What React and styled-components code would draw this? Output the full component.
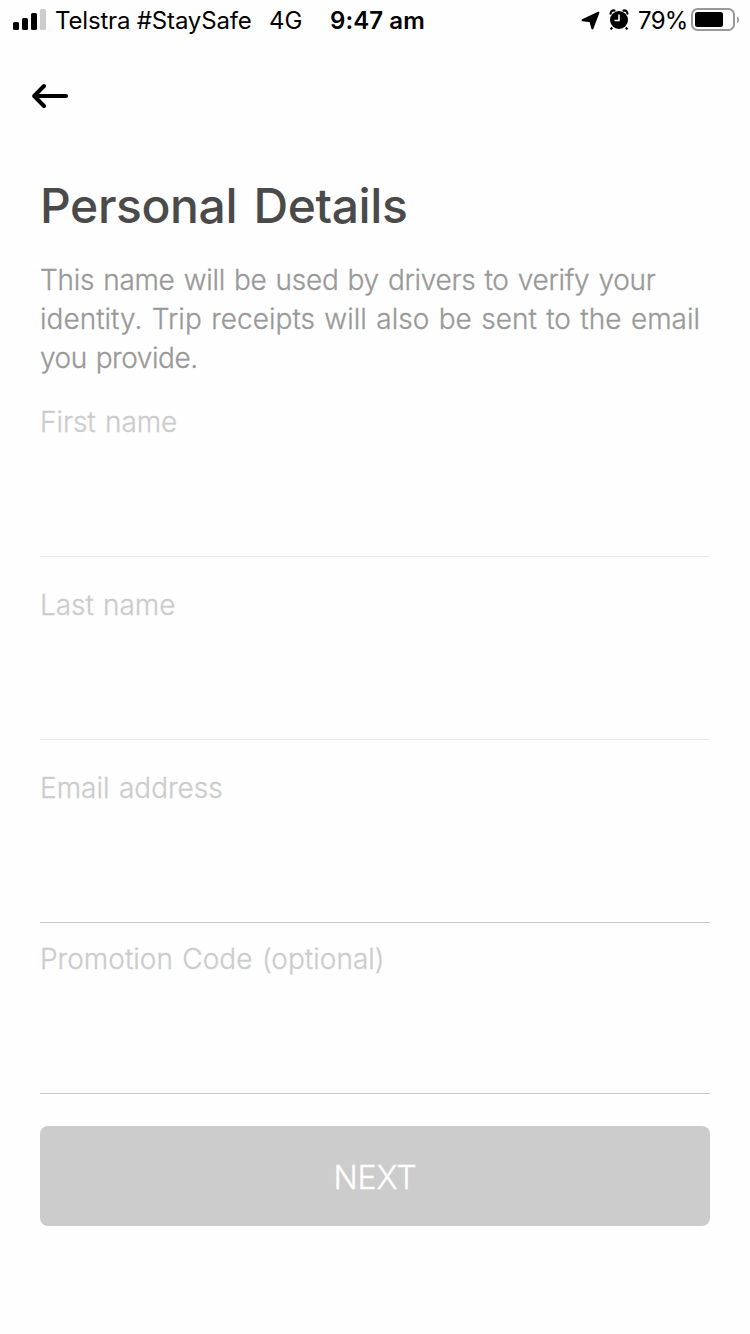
import React, { useState } from "react";
import styled, { createGlobalStyle } from "styled-components";

const GlobalStyle = createGlobalStyle`
  * {
    box-sizing: border-box;
  }

  body {
    margin: 0;
    background: #fefefe;
    font-family: Inter, "Liberation Sans", sans-serif;
  }
`;

const Screen = styled.div`
  width: 750px;
  height: 1334px;
  overflow: hidden;
  background: #fefefe;
`;

const StatusBar = styled.header`
  display: flex;
  align-items: center;
  height: 40px;
  padding-left: 13px;
  color: #000;
  white-space: nowrap;

  svg {
    display: block;
    flex: none;
  }
`;

const StatusText = styled.span`
  width: ${(props) => props.$width}px;
  margin-left: ${(props) => props.$gap}px;
  padding-top: 2px;
  font-size: 24px;
  line-height: 38px;
  font-weight: ${(props) => (props.$bold ? 600 : 400)};
  letter-spacing: ${(props) => props.$spacing || 0}px;
`;

const StatusIcons = styled.div`
  display: flex;
  align-items: center;
  margin-left: auto;
  padding-right: 11px;
`;

const AlarmSlot = styled.div`
  margin-left: 9px;
`;

const NavBar = styled.nav`
  display: flex;
  align-items: center;
  height: 112px;
  padding-left: 32px;
`;

const BackButton = styled.button`
  padding: 0;
  border: none;
  background: none;

  svg {
    display: block;
  }
`;

const Form = styled.form`
  display: flex;
  flex-direction: column;
  padding: 0 40px;
`;

const Title = styled.h1`
  margin: 22px 0 0;
  color: #4a4a4a;
  font-size: 48px;
  line-height: 64px;
  font-weight: 500;
  letter-spacing: -0.4px;
  word-spacing: 4px;
`;

const Description = styled.p`
  margin: 23px 0 25px;
  color: #999;
  font-size: 28px;
  line-height: 39px;
  font-weight: 300;
  -webkit-text-stroke: 0.3px;
`;

const Line = styled.span`
  display: block;
  white-space: nowrap;
  letter-spacing: ${(props) => props.$spacing}px;
  word-spacing: 1.5px;
`;

const Field = styled.div`
  display: flex;
  flex-direction: column;
  height: 154px;
  margin-bottom: ${(props) => props.$after}px;
  border-bottom: 1px solid ${(props) => (props.$strong ? "#c8c8c8" : "#e8e8e8")};

  label {
    color: #ccc;
    font-size: 28px;
    line-height: 38px;
    font-weight: 300;
    letter-spacing: ${(props) => props.$spacing}px;
    word-spacing: 1.5px;
    -webkit-text-stroke: 0.3px;
  }

  input {
    flex: 1;
    padding: 0;
    border: none;
    outline: none;
    background: none;
    color: #4a4a4a;
    font-family: inherit;
    font-size: 32px;
  }
`;

const NextButton = styled.button`
  height: 100px;
  padding: 2px 0 0;
  border: none;
  border-radius: 8px;
  background: #ccc;
  color: #fff;
  font-family: inherit;
  font-size: 32px;
  font-weight: 300;
  letter-spacing: -0.1px;
  -webkit-text-stroke: 0.3px;
`;

const SignalIcon = () => (
  <svg width="33" height="22" viewBox="0 0 33 22">
    <rect x="0" y="13" width="6" height="8" rx="1.5" />
    <rect x="9" y="9" width="6" height="12" rx="1.5" />
    <rect x="18" y="4" width="6" height="17" rx="1.5" />
    <rect x="27" y="0" width="6" height="21" rx="1.5" fill="#ccc" />
  </svg>
);

const LocationIcon = () => (
  <svg width="19" height="20" viewBox="0 0 19 20">
    <path
      d="M17.4 2.6 1.6 10.2 9.4 11.2 11.4 18.4Z"
      stroke="#000"
      strokeWidth="2"
      strokeLinejoin="round"
    />
  </svg>
);

const AlarmIcon = () => (
  <svg width="20" height="22" viewBox="0 0 20 22">
    <path
      d="M1.6 4.6A3 3 0 0 1 5.4 1.6M18.4 4.6A3 3 0 0 0 14.6 1.6"
      fill="none"
      stroke="#000"
      strokeWidth="2.2"
      strokeLinecap="round"
    />
    <circle cx="10" cy="11" r="9" />
    <path d="M3.2 18.5 1.6 20.4M16.8 18.5 18.4 20.4" stroke="#000" strokeWidth="2" />
    <path d="M10 5.5V11.5H5.5" fill="none" stroke="#fff" strokeWidth="1.6" />
  </svg>
);

const BatteryIcon = () => (
  <svg width="48" height="24" viewBox="0 0 48 24">
    <rect x="1" y="1" width="42" height="21" rx="5.5" fill="none" stroke="#999" strokeWidth="2" />
    <rect x="4" y="4" width="28" height="15" rx="2.5" />
    <path d="M46 8.2Q48 9 48 11.7T46 15.2Z" fill="#999" />
  </svg>
);

const ArrowIcon = () => (
  <svg width="36" height="26" viewBox="0 0 36 26">
    <path
      d="M34 13H2.5M12 3 2.2 13 12 23"
      fill="none"
      stroke="#000"
      strokeWidth="4"
      strokeLinecap="round"
      strokeLinejoin="round"
    />
  </svg>
);

const fields = [
  { name: "firstName", label: "First name", after: 29, spacing: -0.05 },
  { name: "lastName", label: "Last name", after: 29, spacing: -0.05 },
  { name: "email", label: "Email address", after: 17, spacing: 0, strong: true },
  { name: "promo", label: "Promotion Code (optional)", after: 32, spacing: 0.02, strong: true },
];

const App = () => {
  const [values, setValues] = useState({});

  const handleChange = (e) =>
    setValues({ ...values, [e.target.name]: e.target.value });

  return (
    <Screen>
      <GlobalStyle />
      <StatusBar>
        <SignalIcon />
        <StatusText $gap={9} $width={205} $spacing={-0.17}>
          Telstra #StaySafe
        </StatusText>
        <StatusText $gap={9} $width={40}>
          4G
        </StatusText>
        <StatusText $gap={21} $width={100} $bold $spacing={0.1}>
          9:47 am
        </StatusText>
        <StatusIcons>
          <LocationIcon />
          <AlarmSlot>
            <AlarmIcon />
          </AlarmSlot>
          <StatusText $gap={9} $width={53} $spacing={-0.7}>
            79%
          </StatusText>
          <BatteryIcon />
        </StatusIcons>
      </StatusBar>

      <NavBar>
        <BackButton type="button" aria-label="Back">
          <ArrowIcon />
        </BackButton>
      </NavBar>

      <Form onSubmit={(e) => e.preventDefault()}>
        <Title>Personal Details</Title>
        <Description>
          <Line $spacing={-0.29}>This name will be used by drivers to verify your</Line>
          <Line $spacing={0.02}>identity. Trip receipts will also be sent to the email</Line>
          <Line $spacing={-0.45}>you provide.</Line>
        </Description>

        {fields.map(({ name, label, after, spacing, strong }) => (
          <Field key={name} $after={after} $spacing={spacing} $strong={strong}>
            <label htmlFor={name}>{label}</label>
            <input
              id={name}
              name={name}
              value={values[name] || ""}
              onChange={handleChange}
            />
          </Field>
        ))}

        <NextButton>NEXT</NextButton>
      </Form>
    </Screen>
  );
};

export default App;
